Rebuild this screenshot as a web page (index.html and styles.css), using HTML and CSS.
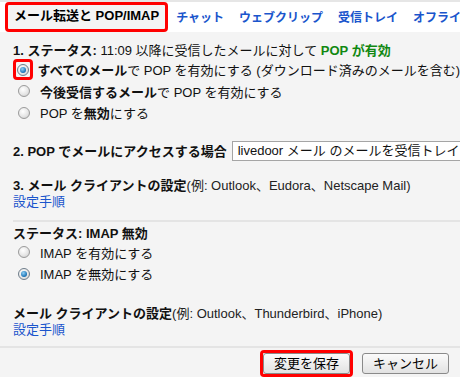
FILE: index.html
```html
<!DOCTYPE html>
<html lang="ja">
<head>
    <meta charset="UTF-8">
    <meta name="viewport" content="width=device-width, initial-scale=1.0">
    <title>設定 - メール転送と POP/IMAP</title>
    <link rel="stylesheet" href="styles.css">
</head>
<body>
    <div class="tabs">
        <div class="tab active mark">メール転送と POP/IMAP</div>
        <a class="tab" href="#">チャット</a>
        <a class="tab" href="#">ウェブクリップ</a>
        <a class="tab" href="#">受信トレイ</a>
        <a class="tab" href="#">オフライン</a>
    </div>

    <div class="content">
        <div class="section">
            <div class="line"><b>1. ステータス:</b> 11:09 以降に受信したメールに対して <b class="on">POP が有効</b></div>
            <div class="radio-row">
                <span class="radio-box mark"><span class="radio checked"></span></span>
                <span><b>すべてのメール</b>で POP を有効にする (ダウンロード済みのメールを含む)</span>
            </div>
            <div class="radio-row">
                <span class="radio-box"><span class="radio"></span></span>
                <span><b>今後受信するメール</b>で POP を有効にする</span>
            </div>
            <div class="radio-row">
                <span class="radio-box"><span class="radio"></span></span>
                <span>POP を<b>無効</b>にする</span>
            </div>
        </div>

        <div class="section access">
            <b>2. POP でメールにアクセスする場合</b>
            <div class="select">livedoor メール のメールを受信トレイに残す</div>
        </div>

        <div class="section client">
            <div class="line"><b>3. メール クライアントの設定</b><span class="note">(例: Outlook、Eudora、Netscape Mail)</span></div>
            <div class="line"><a href="#">設定手順</a></div>
        </div>

        <div class="divider"></div>

        <div class="section">
            <div class="line"><b>ステータス: IMAP 無効</b></div>
            <div class="radio-row">
                <span class="radio-box"><span class="radio"></span></span>
                <span>IMAP を有効にする</span>
            </div>
            <div class="radio-row">
                <span class="radio-box"><span class="radio checked"></span></span>
                <span>IMAP を無効にする</span>
            </div>
        </div>

        <div class="section client imap-client">
            <div class="line"><b>メール クライアントの設定</b><span class="note">(例: Outlook、Thunderbird、iPhone)</span></div>
            <div class="line"><a href="#">設定手順</a></div>
        </div>
    </div>

    <div class="divider bottom"></div>

    <div class="actions">
        <span class="mark btn-mark"><button>変更を保存</button></span>
        <button>キャンセル</button>
    </div>
</body>
</html>
```

FILE: styles.css
```css
body {
    margin: 0;
    background-color: #f4f4f4;
    font-family: "Liberation Sans", "Noto Sans CJK JP", sans-serif;
    font-size: 13px;
    color: #111;
    overflow: hidden;
}
b {
    font-weight: bold;
}
a {
    color: #1a55cc;
    text-decoration: none;
}
.tabs {
    display: flex;
    align-items: flex-end;
    height: 30px;
    background-color: #fff;
    border-top: 2px solid #e6e6e6;
    white-space: nowrap;
}
.tab {
    font-size: 12px;
    font-weight: bold;
    line-height: 19px;
    margin-right: 15px;
    padding-bottom: 4px;
}
.tab.active {
    font-size: 13px;
    margin-left: 5px;
    margin-right: 8px;
    padding: 0 6px 2px 6px;
    height: 22px;
    line-height: 22px;
    background-color: #f4f4f4;
    color: #000;
}
.content {
    padding: 11px 0 0 13px;
    white-space: nowrap;
}
.line {
    line-height: 16px;
}
.on {
    color: #118811;
}
.radio-row {
    display: flex;
    align-items: center;
    height: 21.5px;
}
.radio-box {
    display: flex;
    align-items: center;
    justify-content: center;
    width: 16px;
    height: 15px;
    margin-right: 5px;
    border: 3px solid transparent;
}
.radio {
    width: 12px;
    height: 12px;
    border-radius: 50%;
    border: 1px solid #9a9a9a;
    background: radial-gradient(circle at 40% 35%, #fff 0, #e6e6e6 55%, #c8c8c8 100%);
    box-sizing: border-box;
    position: relative;
}
.radio.checked {
    border-color: #6f7d8a;
}
.radio.checked::after {
    content: "";
    position: absolute;
    left: 2px;
    top: 2px;
    width: 6px;
    height: 6px;
    border-radius: 50%;
    background: radial-gradient(circle at 40% 35%, #8fd0f5 0, #1f76b8 65%, #124f80 100%);
}
.access {
    display: flex;
    align-items: center;
    margin-top: 17px;
    height: 20px;
}
.select {
    margin-left: 5px;
    flex: none;
    height: 18px;
    line-height: 18px;
    padding: 0 5px;
    border: 1px solid #a5a5a5;
    background-color: #fff;
}
.client {
    margin-top: 17px;
}
.note {
    color: #222;
}
.divider {
    height: 0;
    border-top: 2px solid #e4e4e4;
    margin: 10px 0 4px 0;
}
.divider.bottom {
    margin: 8px 0 2px 0;
}
.imap-client {
    margin-top: 21px;
}
.actions {
    display: flex;
    justify-content: flex-end;
    align-items: center;
    gap: 9px;
    padding-right: 11px;
}
.btn-mark {
    display: flex;
}
.mark {
    border: 3px solid #ff0000;
    border-radius: 4px;
}
button {
    font-family: "Liberation Sans", "Noto Sans CJK JP", sans-serif;
    font-size: 13px;
    height: 21px;
    padding: 0 10px;
    border: 1px solid #8a8a8a;
    border-radius: 3px;
    background: linear-gradient(#fbfbfb, #e2e2e2);
    color: #000;
    line-height: 19px;
}
```
